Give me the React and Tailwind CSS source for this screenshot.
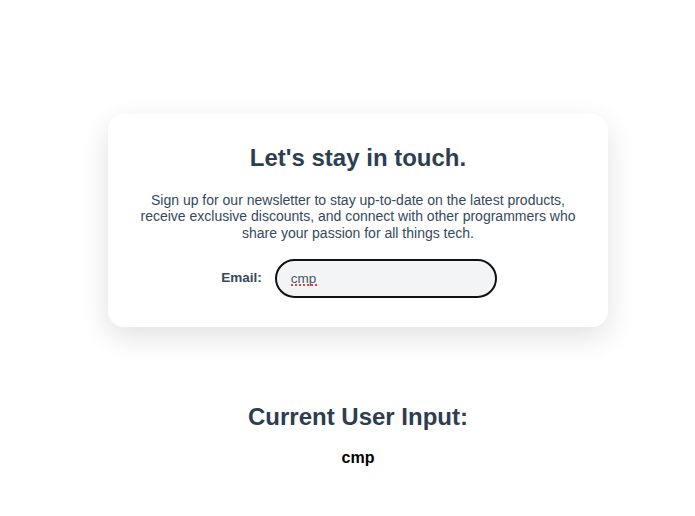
import React, { useState } from "react";

export default function App() {
  const [value, setValue] = useState("cmp");
  return (
    <div className="min-h-[516px] w-full bg-white font-['Liberation_Sans',Arial,sans-serif]">
      <div className="flex flex-col items-center pl-[21px] pt-[114px]">
        <div className="w-[500px] rounded-[16px] bg-white px-[32px] pt-[28px] pb-[29px] shadow-[0_10px_30px_rgba(0,0,0,0.12)] flex flex-col items-center">
          <h1 className="text-[24px] leading-[32px] font-bold text-[#2c3e50] text-center">
            Let's stay in touch.
          </h1>
          <p className="mt-[18px] text-[14px] leading-[16.25px] text-[#34495e] text-center">
            Sign up for our newsletter to stay up-to-date on the latest products,
            receive exclusive discounts, and connect with other programmers who
            share your passion for all things tech.
          </p>
          <div className="mt-[18px] flex items-center justify-center gap-[13px] pl-[2px]">
            <label className="text-[13.5px] font-bold text-[#34495e]">Email:</label>
            <div className="relative">
              <input
                value={value}
                spellCheck={false}
                onChange={(e) => setValue(e.target.value)}
                className="block w-[222px] h-[39px] rounded-full border-2 border-[#111] bg-[#f3f4f6] px-[14px] text-[13.5px] text-[#4a5568] outline-none"
              />
              <span className="pointer-events-none absolute left-[16px] top-[25px] w-[26px] border-b-2 border-dotted border-[#e53e3e]" />
            </div>
          </div>
        </div>
        <h2 className="mt-[74px] text-[24px] leading-[32px] font-bold text-[#2c3e50]">
          Current User Input:
        </h2>
        <div className="mt-[13px] text-[16px] leading-[24px] font-bold text-black">{value}</div>
      </div>
    </div>
  );
}
